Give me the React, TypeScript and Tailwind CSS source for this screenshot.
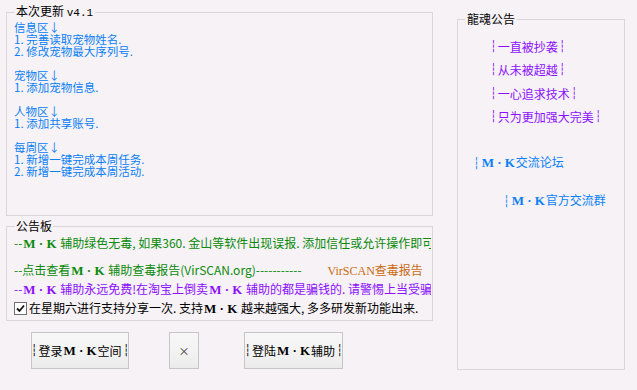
import React from "react";

const MK = () => (
  <span className="font-['Liberation_Serif'] font-bold text-[13px] mx-[1px]">M · K</span>
);

const Bar = () => <span className="font-['DejaVu_Sans_Mono'] text-[11px] mx-[1px]">┆</span>;

const UPDATES: string[] = [
  "信息区↓",
  "1. 完善读取宠物姓名.",
  "2. 修改宠物最大序列号.",
  "",
  "宠物区↓",
  "1. 添加宠物信息.",
  "",
  "人物区↓",
  "1. 添加共享账号.",
  "",
  "每周区↓",
  "1. 新增一键完成本周任务.",
  "2. 新增一键完成本周活动.",
];

const SLOGANS = ["一直被抄袭", "从未被超越", "一心追求技术", "只为更加强大完美"];

function Btn({ children, w }: { children: React.ReactNode; w: string }) {
  return (
    <button
      className={`${w} h-[37px] border border-[#c6c6c6] bg-gradient-to-b from-[#f7f7f7] via-[#f3f3f3] to-[#ebebeb] text-[12px] text-black flex items-center justify-center whitespace-nowrap`}
    >
      {children}
    </button>
  );
}

export default function App() {
  return (
    <div className="w-[637px] h-[390px] bg-[#f6f2f6] flex font-['Noto_Sans_CJK_SC',sans-serif] text-[12px] leading-[14px] overflow-hidden">
      {/* left column */}
      <div className="pl-[6px] w-[433px] flex flex-col">
        {/* 本次更新 */}
        <fieldset className="mt-[4px] h-[212px] border border-[#d9d7da]">
          <legend className="ml-[7px] px-[2px] text-black">
            本次更新 <span className="font-['Liberation_Mono'] text-[11px]">v4.1</span>
          </legend>
          <div className="pl-[7px] pt-[1px] text-[#0a80f5] text-[11.5px] leading-[12px]">
            {UPDATES.map((l, i) => (
              <div key={i} className="h-[12px] whitespace-pre">{l}</div>
            ))}
          </div>
        </fieldset>

        {/* 公告板 */}
        <fieldset className="mt-[3px] h-[102px] border border-[#d9d7da] min-w-0">
          <legend className="ml-[8px] px-[1px] text-black">公告板</legend>
          <div className="pl-[7px] pt-[3px] whitespace-nowrap overflow-hidden w-[424px]">
            <div className="h-[14px] text-[#0a8a0a]">
              --<MK /> 辅助绿色无毒, 如果360. 金山等软件出现误报. 添加信任或允许操作即可
            </div>
            <div className="h-[14px] mt-[13px] text-[#0a8a0a] flex">
              <span>--点击查看<MK /> 辅助查毒报告(VirSCAN.org)-----------</span>
              <span className="ml-[26px] text-[#c96a10]">
                <span className="font-['Liberation_Serif']">VirSCAN</span>查毒报告
              </span>
            </div>
            <div className="h-[14px] mt-[5px] text-[#8c10ff]">
              --<MK /> 辅助永远免费!在淘宝上倒卖<MK /> 辅助的都是骗钱的. 请警惕上当受骗
            </div>
            <div className="h-[16px] mt-[4px] flex items-center text-black">
              <span className="w-[13px] h-[13px] border border-[#707070] bg-white flex items-center justify-center mr-[2px]">
                <svg width="9" height="9" viewBox="0 0 9 9">
                  <path d="M1 4.5 L3.5 7 L8 1.5" stroke="#111" strokeWidth="1.8" fill="none" />
                </svg>
              </span>
              <span>在星期六进行支持分享一次. 支持<MK /> 越来越强大, 多多研发新功能出来.</span>
            </div>
          </div>
        </fieldset>

        {/* buttons */}
        <div className="mt-[11px] ml-[25px] flex">
          <Btn w="w-[98px]"><Bar />登录<MK />空间<Bar /></Btn>
          <div className="ml-[40px]">
            <Btn w="w-[30px]">
              <span className="text-[11px] text-[#333]">×</span>
            </Btn>
          </div>
          <div className="ml-[45px]">
            <Btn w="w-[99px]"><Bar />登陆<MK />辅助<Bar /></Btn>
          </div>
        </div>
      </div>

      {/* 龍魂公告 */}
      <fieldset className="ml-[24px] mt-[12px] w-[168px] h-[358px] border border-[#d9d7da]">
        <legend className="ml-[7px] px-[2px] text-black">龍魂公告</legend>
        <div className="pl-[31px] pt-[9px] text-[#8c10ff]">
          {SLOGANS.map((s) => (
            <div key={s} className="h-[23.5px] flex items-center whitespace-nowrap">
              <Bar />{s}<Bar />
            </div>
          ))}
        </div>
        <div className="text-[#0a80f5] whitespace-nowrap">
          <div className="pl-[14px] mt-[26px] h-[14px]"><Bar /><MK />交流论坛</div>
          <div className="pl-[44px] mt-[24px] h-[14px]"><Bar /><MK />官方交流群</div>
        </div>
      </fieldset>
    </div>
  );
}
